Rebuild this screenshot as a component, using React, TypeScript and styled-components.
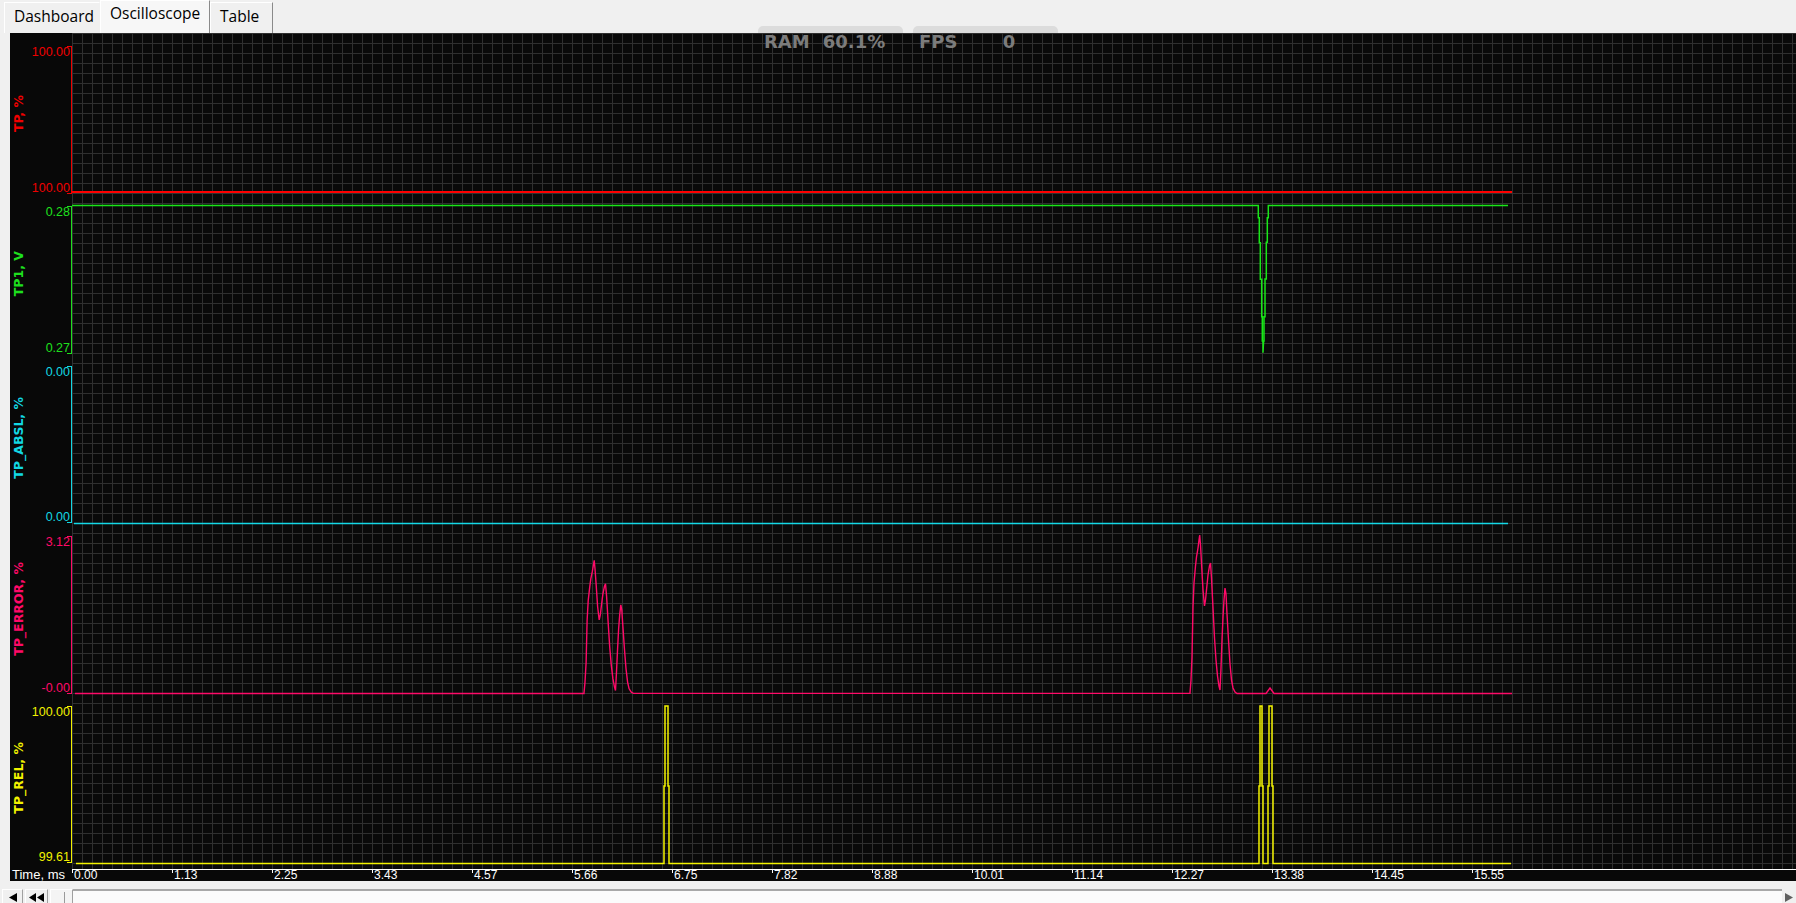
import React from 'react';
import styled, { createGlobalStyle } from 'styled-components';

const GlobalStyle = createGlobalStyle`
  html, body {
    margin: 0;
    padding: 0;
    background: #f0f0f0;
    overflow: hidden;
  }
  body {
    font-family: "Liberation Sans", Arial, sans-serif;
  }
`;

type Channel = {
  title: string;
  color: string;
  top: string;
  bottom: string;
  height: number;
  gap: number;
};

const channels: Channel[] = [
  { title: 'TP, %', color: '#f00000', top: '100.00', bottom: '100.00', height: 148, gap: 0 },
  { title: 'TP1, V', color: '#1ee01e', top: '0.28', bottom: '0.27', height: 148, gap: 12 },
  { title: 'TP_ABSL, %', color: '#12d8e4', top: '0.00', bottom: '0.00', height: 157, gap: 12 },
  { title: 'TP_ERROR, %', color: '#ff0a68', top: '3.12', bottom: '-0.00', height: 158, gap: 13 },
  { title: 'TP_REL, %', color: '#f2f200', top: '100.00', bottom: '99.61', height: 157, gap: 12 },
];

const timeTicks = [
  '0.00', '1.13', '2.25', '3.43', '4.57', '5.66', '6.75', '7.82',
  '8.88', '10.01', '11.14', '12.27', '13.38', '14.45', '15.55',
];

// error trace burst near 12.3 ms, page coordinates
const burst: number[][] = [
  [1190, 693], [1191, 680], [1192, 657], [1193, 607], [1194, 583], [1195.5, 566],
  [1196.5, 557], [1198, 548], [1199, 540], [1199.7, 535], [1200.5, 545], [1201.5, 563],
  [1203, 590], [1204.5, 606], [1205.5, 600], [1206.5, 590], [1208, 575], [1209.5, 566],
  [1210.5, 563], [1211.5, 578], [1213, 608], [1214.5, 638], [1216, 660], [1217.5, 676],
  [1219, 686], [1220, 690], [1221, 668], [1222, 640], [1223, 617], [1224, 600],
  [1225, 588], [1226, 594], [1227, 614], [1228.5, 640], [1230, 664], [1231.5, 680],
  [1233, 688], [1235, 692], [1237, 693.5],
];

const firstBurst = burst.map(([x, y]) => [584 + (x - 1190) * 1.05, 693 - (693 - y) * 0.84]);

const toLine = (pts: number[][]) => pts.map(([x, y]) => `L${x.toFixed(1)} ${y.toFixed(1)}`).join(' ');

const errorPath = `M75 693.5 H584 ${toLine(firstBurst)} H1190 ${toLine(burst)} H1266 L1270 688 L1274 693.5 H1512`;

const tp1Path =
  'M72 205.5 H1258.3 V217.7 H1259.3 V242.7 H1260.3 V279.3 H1261.7 V316.7 H1262.3 V341 H1263 V352.7 ' +
  'L1263.6 341 H1264 V316.7 H1265 V279 H1266.3 V242.3 H1267.3 V217.7 H1268.3 V205.5 H1508';

const pulse = (x: number, w: number) =>
  `H${x} V786 H${x + 1} V706 H${x + w - 1} V786 H${x + w} V863.5`;

const relPath = `M76 863.5 ${pulse(664, 5)} ${pulse(1259, 4)} ${pulse(1268, 5)} H1511`;

const Page = styled.div`
  position: relative;
  width: 1796px;
  height: 903px;
  overflow: hidden;
  background: #f0f0f0;
`;

const TabBar = styled.div`
  display: flex;
  align-items: flex-end;
  height: 33px;
  padding-left: 4px;
  box-sizing: border-box;
`;

const Tab = styled.div<{ $active?: boolean; $width: number; $edge: string }>`
  box-sizing: border-box;
  width: ${(p) => p.$width}px;
  height: ${(p) => (p.$active ? 33 : 31)}px;
  padding: ${(p) => (p.$active ? 2 : 3)}px 0 0 9px;
  font-family: "Open Sans", "Liberation Sans", sans-serif;
  font-size: 15.5px;
  line-height: 20px;
  color: #000;
  background: ${(p) => (p.$active ? '#f7f7f7' : '#f0f0f0')};
  border-top: 1px solid #fff;
  border-left: 1px solid #fff;
  border-right: 1px solid ${(p) => p.$edge};
`;

const Scope = styled.div`
  margin-left: 10px;
  background: #080808;
  display: flex;
  flex-direction: column;
`;

const PlotRow = styled.div`
  display: flex;
  height: 836px;
`;

const AxisColumn = styled.div`
  width: 62px;
  flex-shrink: 0;
  display: flex;
  flex-direction: column;
  padding-top: 13px;
  box-sizing: border-box;
`;

const AxisPanel = styled.div<{ $h: number; $mt: number; $color: string }>`
  display: flex;
  height: ${(p) => p.$h}px;
  margin-top: ${(p) => p.$mt}px;
  color: ${(p) => p.$color};
`;

const TitleCell = styled.div`
  width: 17px;
  display: flex;
  align-items: center;
  justify-content: center;
  padding-bottom: 13px;
  box-sizing: border-box;
`;

const TitleText = styled.span`
  writing-mode: vertical-rl;
  transform: rotate(180deg);
  font-family: "DejaVu Sans", sans-serif;
  font-weight: bold;
  font-size: 12.5px;
  line-height: 14px;
  white-space: nowrap;
`;

const Values = styled.div`
  flex: 1;
  display: flex;
  flex-direction: column;
  justify-content: space-between;
  align-items: flex-end;
  margin: -1px 0;
  padding-right: 1px;
  font-size: 12.5px;
  line-height: 14px;
`;

const Bracket = styled.div`
  position: relative;
  width: 1px;
  background: currentColor;

  &::before,
  &::after {
    content: '';
    position: absolute;
    right: 0;
    width: 5px;
    height: 1px;
    background: currentColor;
  }
  &::before {
    top: 0;
  }
  &::after {
    bottom: 0;
  }
`;

const Canvas = styled.div`
  flex: 1;
  min-width: 0;

  svg {
    display: block;
    width: 100%;
    height: 100%;
  }
`;

const TimeRow = styled.div`
  display: flex;
  height: 12px;
  color: #fff;
`;

const TimeLabel = styled.div`
  width: 62px;
  flex-shrink: 0;
  padding-left: 2px;
  box-sizing: border-box;
  font-size: 13px;
  line-height: 12px;
`;

const TickArea = styled.div`
  flex: 1;
  display: flex;
  border-top: 1px solid #fff;
`;

const Tick = styled.div`
  width: 100px;
  flex-shrink: 0;
  padding-left: 2px;
  box-sizing: border-box;
  font-size: 12px;
  line-height: 11px;
  background: linear-gradient(#fff, #fff) no-repeat left top / 1px 3px;
`;

const ScrollBar = styled.div`
  display: flex;
  height: 16px;
  margin-top: 8px;
  padding-left: 2px;
`;

const ScrollButton = styled.div<{ $width: number }>`
  width: ${(p) => p.$width}px;
  box-sizing: border-box;
  margin-right: 2px;
  display: flex;
  align-items: center;
  justify-content: center;
  background: #f0f0f0;
  border-top: 1px solid #fff;
  border-left: 1px solid #fff;
  border-right: 1px solid #a0a0a0;
  border-bottom: 1px solid #a0a0a0;
`;

const Thumb = styled.div`
  width: 23px;
  box-sizing: border-box;
  background: linear-gradient(#9a9a9a, #9a9a9a) no-repeat 13px 2px / 1px 12px, #f4f4f4;
  border: 1px solid #a0a0a0;
  border-top-color: #fff;
  border-left-color: #fff;
`;

const Track = styled.div`
  flex: 1;
  background: #fbfbfb;
  border-top: 2px solid #a8a8a8;
`;

const EndButton = styled.div`
  width: 14px;
  display: flex;
  justify-content: center;
  padding-top: 4px;
`;

const Stats = styled.div`
  position: absolute;
  top: 26px;
  left: 758px;
  display: flex;
  gap: 10px;
`;

const StatBox = styled.div`
  width: 145px;
`;

const StatCap = styled.div`
  height: 7px;
  background: #dcdcdc;
  border-radius: 5px 5px 0 0;
`;

const StatLine = styled.div`
  display: flex;
  margin-top: -2px;
  padding-left: 6px;
  font-family: "DejaVu Sans", sans-serif;
  font-weight: bold;
  font-size: 18px;
  line-height: 21px;
  color: #7c7c7c;
`;

const StatName = styled.span`
  width: 56px;
`;

const StatValue = styled.span`
  width: 68px;
  text-align: center;
`;

const Grid = () => (
  <defs>
    <pattern id="grid" width="10" height="10" patternUnits="userSpaceOnUse">
      <rect x="0" y="0" width="10" height="10" fill="#0a0a0a" />
      <rect x="0" y="0" width="1" height="10" fill="#303030" />
      <rect x="0" y="0" width="10" height="1" fill="#303030" />
    </pattern>
  </defs>
);

const Traces = () => (
  <g transform="translate(-72 -33)" fill="none" strokeLinejoin="miter">
    <path d="M72 192 H1512" stroke="#ff0000" strokeWidth="2" />
    <path d={tp1Path} stroke="#19e619" strokeWidth="1.5" />
    <path d="M74 523.5 H1508" stroke="#14d8e6" strokeWidth="1.5" />
    <path d={errorPath} stroke="#ff0a68" strokeWidth="1.4" />
    <path d={relPath} stroke="#f4f400" strokeWidth="1.5" />
  </g>
);

const App = () => {
  return (
    <Page>
      <GlobalStyle />
      <TabBar>
        <Tab $width={96} $edge="#f0f0f0">Dashboard</Tab>
        <Tab $width={110} $active $edge="#8a8a8a">Oscilloscope</Tab>
        <Tab $width={63} $edge="#8a8a8a">Table</Tab>
      </TabBar>

      <Scope>
        <PlotRow>
          <AxisColumn>
            {channels.map((ch) => (
              <AxisPanel key={ch.title} $h={ch.height} $mt={ch.gap} $color={ch.color}>
                <TitleCell>
                  <TitleText>{ch.title}</TitleText>
                </TitleCell>
                <Values>
                  <span>{ch.top}</span>
                  <span>{ch.bottom}</span>
                </Values>
                <Bracket />
              </AxisPanel>
            ))}
          </AxisColumn>
          <Canvas>
            <svg>
              <Grid />
              <rect width="100%" height="100%" fill="url(#grid)" />
              <Traces />
            </svg>
          </Canvas>
        </PlotRow>
        <TimeRow>
          <TimeLabel>Time, ms</TimeLabel>
          <TickArea>
            {timeTicks.map((t) => (
              <Tick key={t}>{t}</Tick>
            ))}
          </TickArea>
        </TimeRow>
      </Scope>

      <ScrollBar>
        <ScrollButton $width={21}>
          <svg width="8" height="9" viewBox="0 0 8 9">
            <polygon points="8,0 8,9 0,4.5" fill="#000" />
          </svg>
        </ScrollButton>
        <ScrollButton $width={23}>
          <svg width="15" height="9" viewBox="0 0 15 9">
            <polygon points="7,0 7,9 0,4.5" fill="#000" />
            <polygon points="15,0 15,9 8,4.5" fill="#000" />
          </svg>
        </ScrollButton>
        <Thumb />
        <Track />
        <EndButton>
          <svg width="8" height="9" viewBox="0 0 8 9">
            <polygon points="0,0 0,9 8,4.5" fill="#606060" />
          </svg>
        </EndButton>
      </ScrollBar>

      <Stats>
        <StatBox>
          <StatCap />
          <StatLine>
            <StatName>RAM</StatName>
            <StatValue>60.1%</StatValue>
          </StatLine>
        </StatBox>
        <StatBox>
          <StatCap />
          <StatLine>
            <StatName>FPS</StatName>
            <StatValue>0</StatValue>
          </StatLine>
        </StatBox>
      </Stats>
    </Page>
  );
};

export default App;
